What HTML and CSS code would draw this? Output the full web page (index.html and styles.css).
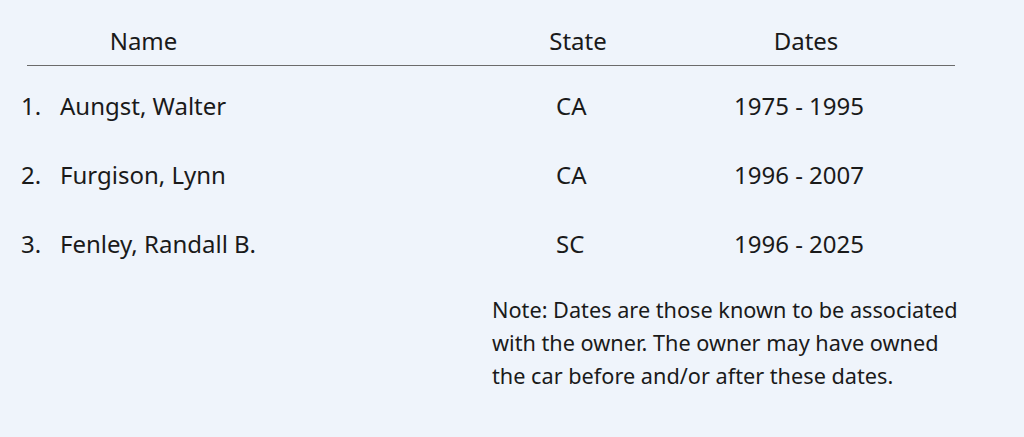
FILE: index.html
```html
<!DOCTYPE html>
<html>
<head>
<meta charset="utf-8">
<link rel="stylesheet" href="styles.css">
</head>
<body>
<div class="owners">
  <div class="head">
    <div class="h-name">Name</div>
    <div class="h-state">State</div>
    <div class="h-dates">Dates</div>
  </div>
  <ol class="rows">
    <li class="row"><span class="num">1.</span><span class="name">Aungst, Walter</span><span class="state">CA</span><span class="dates">1975 - 1995</span></li>
    <li class="row"><span class="num">2.</span><span class="name">Furgison, Lynn</span><span class="state">CA</span><span class="dates">1996 - 2007</span></li>
    <li class="row"><span class="num">3.</span><span class="name">Fenley, Randall B.</span><span class="state">SC</span><span class="dates">1996 - 2025</span></li>
  </ol>
  <p class="note">Note: Dates are those known to be associated with the owner. The owner may have owned the car before and/or after these dates.</p>
</div>
</body>
</html>
```

FILE: styles.css
```css
html, body {
  margin: 0;
  padding: 0;
  background: #eff4fb;
}
body {
  font-family: "Noto Sans", "Open Sans", sans-serif;
  color: #1a1a1a;
  width: 1024px;
  height: 437px;
  overflow: hidden;
}
.owners {
  padding: 24px 0 0 0;
}
.head {
  display: grid;
  grid-template-columns: 233px 239px 158px 298px;
  margin-left: 27px;
  width: 928px;
  font-size: 24px;
  line-height: 34px;
  padding-bottom: 7px;
  border-bottom: 1px solid #6b6b6b;
}
.head > div { text-align: center; }
.h-name { grid-column: 1; }
.h-state { grid-column: 3; }
.h-dates { grid-column: 4; }
.rows {
  list-style: none;
  margin: 0;
  padding: 0;
  padding-top: 23px;
}
.row {
  display: grid;
  grid-template-columns: 21px 39px 496px 178px auto;
  font-size: 24px;
  line-height: 34px;
  height: 69px;
}
.num { grid-column: 2; }
.name { grid-column: 3; }
.state { grid-column: 4; }
.dates { grid-column: 5; }
.note {
  margin: -3px 0 0 492px;
  width: 472px;
  font-size: 21.7px;
  line-height: 33px;
}
```
